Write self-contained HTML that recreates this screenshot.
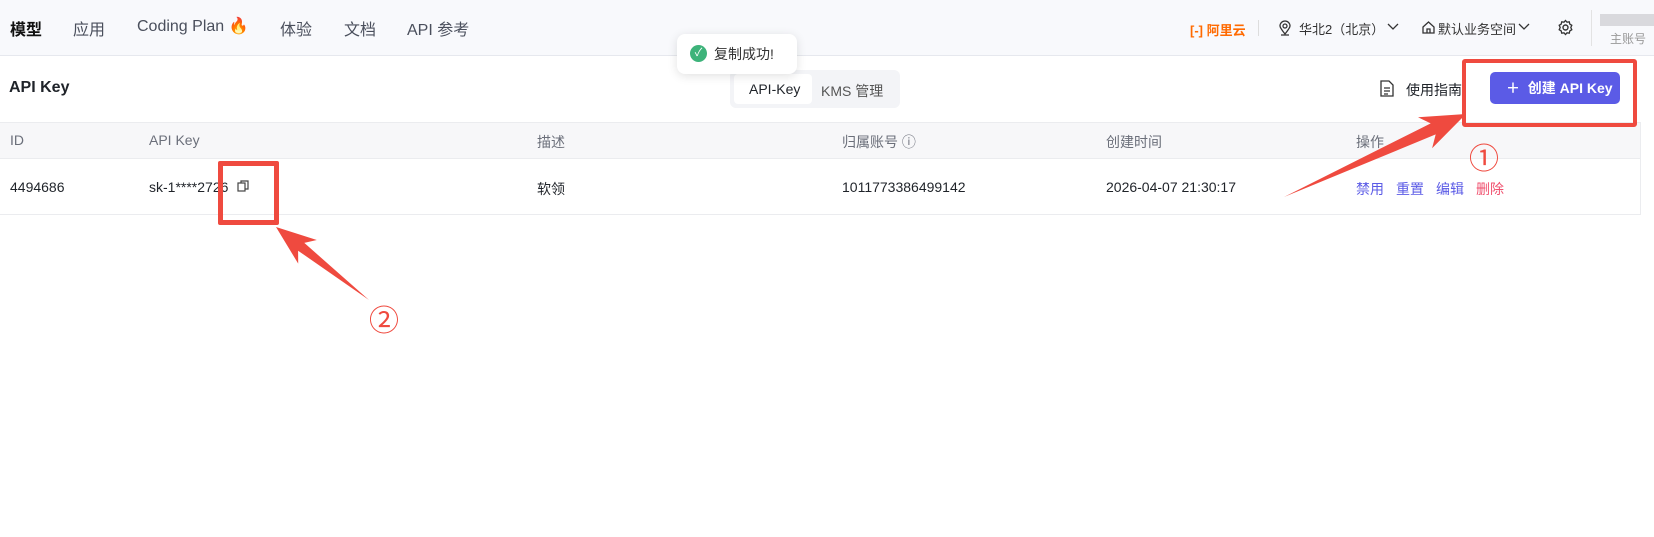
<!DOCTYPE html>
<html><head><meta charset="utf-8"><style>
*{margin:0;padding:0;box-sizing:border-box}
body{width:1654px;height:537px;background:#fff;font-family:"Liberation Sans","Noto Sans CJK SC",sans-serif;position:relative;overflow:hidden;color:#1f2329}
.a{position:absolute;white-space:nowrap}
.nav{position:absolute;left:0;top:0;width:1654px;height:56px;background:#f8f9fc;border-bottom:1px solid #e6e8ee}
.nv{position:absolute;top:16px;font-size:16px;color:#4a4f5c}
.th{position:absolute;left:0;top:122px;width:1641px;height:37px;background:#f7f7f9;border-top:1px solid #ebecef;border-bottom:1px solid #ebecef}
.h{position:absolute;top:132px;font-size:14px;color:#6b6f7a}
.r{position:absolute;top:179px;font-size:14px;color:#1f2329}
.lk{position:absolute;top:179px;font-size:14px;color:#5b5be6}
</style></head><body>
<div class="nav"></div>
<div class="nv" style="left:10px;color:#111;font-weight:bold">模型</div>
<div class="nv" style="left:73px">应用</div>
<div class="nv" style="left:137px">Coding Plan <span style="color:#f08a4b">🔥</span></div>
<div class="nv" style="left:280px">体验</div>
<div class="nv" style="left:344px">文档</div>
<div class="nv" style="left:407px">API 参考</div>

<div class="a" style="left:1190px;top:20px;font-size:13px;font-weight:bold;color:#ff6a00">[-] 阿里云</div>
<div class="a" style="left:1258px;top:20px;width:1px;height:16px;background:#ddd"></div>
<svg class="a" style="left:1278px;top:20px" width="14" height="16" viewBox="0 0 14 16"><path d="M7 14C3 9 2 7 2 6a5 5 0 0110 0c0 1-1 3-5 8z M7 8a2 2 0 100-4 2 2 0 000 4z M3 15h8" fill="none" stroke="#333" stroke-width="1.3"/></svg>
<div class="a" style="left:1299px;top:19px;font-size:13px;color:#333">华北2（北京）</div>
<svg class="a" style="left:1387px;top:23px" width="12" height="8" viewBox="0 0 12 8"><path d="M1 1l5 5 5-5" fill="none" stroke="#333" stroke-width="1.3"/></svg>
<svg class="a" style="left:1421px;top:20px" width="15" height="15" viewBox="0 0 15 15"><path d="M2 7L7.5 2 13 7v6H2z M6 13V9h3v4" fill="none" stroke="#333" stroke-width="1.3"/></svg>
<div class="a" style="left:1438px;top:19px;font-size:13px;color:#333">默认业务空间</div>
<svg class="a" style="left:1518px;top:23px" width="12" height="8" viewBox="0 0 12 8"><path d="M1 1l5 5 5-5" fill="none" stroke="#333" stroke-width="1.3"/></svg>
<svg class="a" style="left:1557px;top:19px" width="17" height="17" viewBox="0 0 17 17"><circle cx="8.5" cy="8.5" r="2.5" fill="none" stroke="#333" stroke-width="1.4"/><path d="M8.5 1.5l1.5 1.7 2.3-.3.5 2.2 2 1.2-1 2.2 1 2.2-2 1.2-.5 2.2-2.3-.3-1.5 1.7-1.5-1.7-2.3.3-.5-2.2-2-1.2 1-2.2-1-2.2 2-1.2.5-2.2 2.3.3z" fill="none" stroke="#333" stroke-width="1.3"/></svg>
<div class="a" style="left:1591px;top:10px;width:1px;height:36px;background:#e3e3e3"></div>
<div class="a" style="left:1600px;top:14px;width:54px;height:12px;background:#d9d9dd"></div>
<div class="a" style="left:1610px;top:30px;font-size:12px;color:#999">主账号</div>

<div class="a" style="left:9px;top:79px;font-size:16px;font-weight:bold;color:#1f2329">API Key</div>
<div class="a" style="left:730px;top:70px;width:170px;height:38px;background:#f3f4f7;border-radius:6px"></div>
<div class="a" style="left:734px;top:74px;width:78px;height:30px;background:#fff;border-radius:4px"></div>
<div class="a" style="left:749px;top:81px;font-size:14px;color:#1f2329">API-Key</div>
<div class="a" style="left:821px;top:81px;font-size:14px;color:#555">KMS 管理</div>

<div class="a" style="left:677px;top:34px;width:120px;height:40px;background:#fff;border-radius:8px;box-shadow:0 2px 10px rgba(0,0,0,.12)"></div>
<div class="a" style="left:690px;top:45px;width:17px;height:17px;border-radius:50%;background:#3db37a;color:#fff;font-size:11px;text-align:center;line-height:17px">✓</div>
<div class="a" style="left:714px;top:44px;font-size:14px;color:#333">复制成功!</div>

<svg class="a" style="left:1380px;top:80px" width="14" height="17" viewBox="0 0 14 17"><path d="M1 1h8l4 4v11H1z M4 8h6 M4 11h6 M4 14h4" fill="none" stroke="#333" stroke-width="1.3"/></svg>
<div class="a" style="left:1406px;top:80px;font-size:14px;color:#1f2329">使用指南</div>
<div class="a" style="left:1490px;top:72px;width:130px;height:32px;background:#5b5be6;border-radius:5px;color:#fff;font-size:14px;font-weight:bold;line-height:32px;padding-left:16px">＋&nbsp;&nbsp;创建 API Key</div>

<div class="th"></div>
<div class="a" style="left:1640px;top:122px;width:1px;height:92px;background:#ebecef"></div>
<div class="h" style="left:10px">ID</div>
<div class="h" style="left:149px">API Key</div>
<div class="h" style="left:537px">描述</div>
<div class="h" style="left:842px">归属账号 ⓘ</div>
<div class="h" style="left:1106px">创建时间</div>
<div class="h" style="left:1356px">操作</div>
<div class="a" style="left:0;top:214px;width:1641px;height:1px;background:#ebecef"></div>
<div class="r" style="left:10px">4494686</div>
<div class="r" style="left:149px">sk-1****2726</div>
<svg class="a" style="left:237px;top:180px" width="12" height="12" viewBox="0 0 12 12"><rect x="1" y="3" width="7" height="8" fill="none" stroke="#444" stroke-width="1.2"/><path d="M4 3V1h7v8H8" fill="none" stroke="#444" stroke-width="1.2"/></svg>
<div class="r" style="left:537px">软领</div>
<div class="r" style="left:842px">1011773386499142</div>
<div class="r" style="left:1106px">2026-04-07 21:30:17</div>
<div class="lk" style="left:1356px">禁用</div>
<div class="lk" style="left:1396px">重置</div>
<div class="lk" style="left:1436px">编辑</div>
<div class="lk" style="left:1476px;color:#f0506e">删除</div>

<div class="a" style="left:1462px;top:59px;width:175px;height:68px;border:4px solid #ef4a3f;border-radius:3px"></div>
<div class="a" style="left:218px;top:161px;width:61px;height:64px;border:5px solid #ef4a3f;border-radius:2px"></div>
<svg class="a" style="left:0;top:0" width="1654" height="537">
<polygon points="369,300 304.3,242.9 316.8,240 276,227 298.2,263.6 298.1,250.7" fill="#ef4a3f"/>
<polygon points="1284,197 1435.7,134.4 1432.1,148.2 1466,114 1418,117.2 1430.7,123.4" fill="#ef4a3f"/>
</svg>
<div class="a" style="left:369px;top:296px;font-size:30px;color:#ef4a3f">②</div>
<div class="a" style="left:1469px;top:134px;font-size:30px;color:#ef4a3f">①</div>
</body></html>
